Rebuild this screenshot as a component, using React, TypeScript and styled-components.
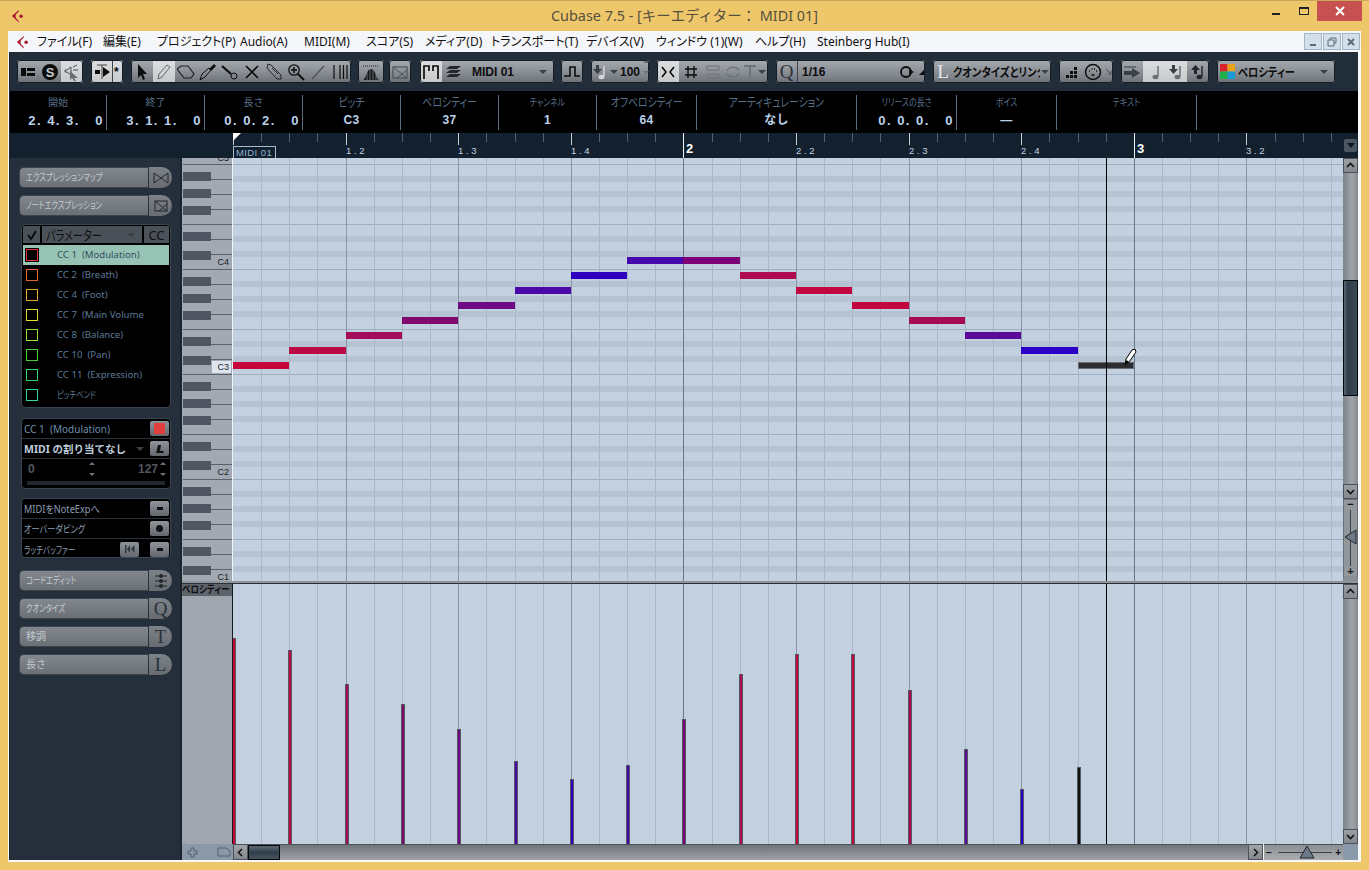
import React from "react";
import styled, { createGlobalStyle } from "styled-components";

const UI = `"Noto Sans", "Noto Sans CJK JP", sans-serif`;
const BOLD = `"Liberation Sans", "Noto Sans CJK JP", sans-serif`;

const BEAT = 112.6;
const SIXTEENTH = BEAT / 4;
const STEP = BEAT / 2;

const GlobalStyle = createGlobalStyle`
  html, body { margin: 0; padding: 0; background: #efc76b; }
  * { box-sizing: border-box; font-feature-settings: "palt"; }
`;

const menus = [
  ["ファイル(F)", 66],
  ["編集(E)", 54],
  ["プロジェクト(P)", 83],
  ["Audio(A)", 64],
  ["MIDI(M)", 62],
  ["スコア(S)", 59],
  ["メディア(D)", 66],
  ["トランスポート(T)", 95],
  ["デバイス(V)", 70],
  ["ウィンドウ (1)(W)", 99],
  ["ヘルプ(H)", 62],
  ["Steinberg Hub(I)", 110],
] as const;

const infoCells = [
  { label: "開始", value: "2. 4. 3.   0", w: 97, time: true },
  { label: "終了", value: "3. 1. 1.   0", w: 98, time: true },
  { label: "長さ", value: "0. 0. 2.   0", w: 98, time: true },
  { label: "ピッチ", value: "C3", w: 98, big: true, kana: true },
  { label: "ベロシティー", value: "37", w: 98, big: true, kana: true },
  { label: "チャンネル", value: "1", w: 98, kana: true },
  { label: "オフベロシティー", value: "64", w: 100, big: true, kana: true },
  { label: "アーティキュレーション", value: "なし", w: 160, big: true, kana: true },
  { label: "リリースの長さ", value: "0. 0. 0.   0", w: 100, time: true, kana: true },
  { label: "ボイス", value: "—", w: 100, kana: true },
  { label: "テキスト", value: "", w: 140, kana: true },
];

const notes = [
  { y: 365, top: 638, c: "#c4083a" },
  { y: 350, top: 650, c: "#bc0845" },
  { y: 335, top: 684, c: "#a30a58" },
  { y: 320, top: 704, c: "#80086f" },
  { y: 305, top: 729, c: "#6f0a84" },
  { y: 290, top: 761, c: "#4a08a8" },
  { y: 275, top: 779, c: "#3000c0" },
  { y: 260, top: 765, c: "#4408ac" },
  { y: 260, top: 719, c: "#7d0078" },
  { y: 275, top: 674, c: "#b00a50" },
  { y: 290, top: 654, c: "#c2063f" },
  { y: 305, top: 654, c: "#c2063f" },
  { y: 320, top: 690, c: "#a50a55" },
  { y: 335, top: 749, c: "#5a0a98" },
  { y: 350, top: 789, c: "#2a00c8" },
  { y: 365, top: 767, c: "#111111" },
];

const blackKeys = [172, 189, 206, 232, 251, 277, 294, 311, 337, 356, 382, 399, 416, 442, 461, 487, 504, 521, 547, 566];
const keyLines = Array.from({ length: 28 }, (_, i) => 164 + i * 15);
const fullLines = [164, 224, 269, 329, 374, 434, 479, 539];

const controllers = [
  ["CC 1  (Modulation)", "#e03030"],
  ["CC 2  (Breath)", "#e46a2c"],
  ["CC 4  (Foot)", "#e0a52c"],
  ["CC 7  (Main Volume", "#d8dc30"],
  ["CC 8  (Balance)", "#90e030"],
  ["CC 10  (Pan)", "#44d030"],
  ["CC 11  (Expression)", "#30d468"],
  ["ピッチベンド", "#30d8a0"],
];

const Page = styled.div`
  width: 1369px;
  height: 870px;
  background: #efc76b;
  border-top: 1px solid #c9a858;
  display: flex;
  flex-direction: column;
  overflow: hidden;
`;

const TitleBar = styled.div`
  height: 30px;
  display: grid;
  grid-template-columns: 1fr auto 1fr;
  align-items: start;
`;

const TitleLogo = styled.div`
  padding: 8px 0 0 11px;
`;

const TitleText = styled.div`
  padding-top: 5px;
  font: 14.4px ${UI};
  line-height: 20px;
  color: #55503f;
  white-space: pre;
`;

const WinControls = styled.div`
  display: flex;
  justify-content: flex-end;
  padding-right: 7px;
`;

const WinButton = styled.div<{ $w: number; $close?: boolean }>`
  width: ${(p) => p.$w}px;
  height: 20px;
  display: flex;
  align-items: center;
  justify-content: center;
  background: ${(p) => (p.$close ? "#c75050" : "transparent")};
`;

const WinMin = styled.div`
  width: 8px;
  height: 2px;
  margin-top: 6px;
  background: #222;
`;

const WinMax = styled.div`
  width: 10px;
  height: 8px;
  border: 1px solid #222;
  border-top-width: 2px;
`;

const Client = styled.div`
  margin: 0 8px;
  height: 831px;
  background: #f7f8fb;
  display: flex;
  flex-direction: column;
`;

const MenuBar = styled.div`
  height: 21px;
  display: flex;
  align-items: center;
  background: #f5f6fa;
  font: 12px ${UI};
  color: #111;
  flex: none;
`;

const MenuLogo = styled.div`
  width: 29px;
  padding-left: 8px;
  flex: none;
`;

const MenuItem = styled.div<{ $w: number }>`
  width: ${(p) => p.$w}px;
  flex: none;
  white-space: pre;
  line-height: 20px;
`;

const MdiButtons = styled.div`
  margin-left: auto;
  display: flex;
  gap: 1px;
  padding-right: 1px;
`;

const MdiButton = styled.div`
  width: 18px;
  height: 17px;
  background: #d3e0ec;
  border: 1px solid #a3b6c8;
  display: flex;
  align-items: center;
  justify-content: center;
`;

const Inner = styled.div`
  margin: 0 3px 0 1px;
  border-left: 1px solid #1b232c;
  flex: none;
  display: flex;
  flex-direction: column;
  height: 808px;
`;

const Toolbar = styled.div`
  height: 39px;
  background: #222d3a;
  padding: 8px 0 0 7px;
  display: flex;
  align-items: flex-start;
  flex: none;
`;

const Group = styled.div<{ $w: number; $ml?: number }>`
  width: ${(p) => p.$w}px;
  height: 23px;
  margin-left: ${(p) => p.$ml ?? 8}px;
  flex: none;
  display: flex;
  align-items: stretch;
  border-radius: 3px;
  overflow: hidden;
  outline: 1px solid #161c23;
  outline-offset: -1px;
  background: linear-gradient(#a6abb0, #8b9096 50%, #6b7178);
`;

const Seg = styled.div<{ $w?: number; $on?: boolean; $line?: boolean }>`
  width: ${(p) => (p.$w ? `${p.$w}px` : "auto")};
  flex: ${(p) => (p.$w ? "none" : "1")};
  display: flex;
  align-items: center;
  justify-content: center;
  background: ${(p) => (p.$on ? "linear-gradient(#dcdedf, #c6c8c9)" : "transparent")};
  border-right: ${(p) => (p.$line ? "1px solid #3d434a" : "none")};
`;

const SegLabel = styled.div<{ $pad?: number }>`
  flex: 1;
  min-width: 0;
  overflow: hidden;
  white-space: nowrap;
  padding-left: ${(p) => p.$pad ?? 8}px;
  align-self: center;
  font: bold 12px ${BOLD};
  color: #0c0c0c;
`;

// the original UI font has narrow kana, so kana labels are squeezed sideways
const Narrow = styled.span<{ $x?: number; $center?: boolean }>`
  display: inline-block;
  white-space: pre;
  transform: scaleX(${(p) => p.$x ?? 0.76});
  transform-origin: ${(p) => (p.$center ? "center" : "left")} center;
`;

const Caret = styled.div<{ $tight?: boolean }>`
  flex: none;
  width: 0;
  height: 0;
  align-self: center;
  margin: ${(p) => (p.$tight ? "1px 2px 0 1px" : "1px 7px 0 3px")};
  border: 4px solid transparent;
  border-top-color: #3b4047;
  border-bottom: 0;
`;

const Ico = styled.svg<{ $s?: number }>`
  width: ${(p) => p.$s ?? 18}px;
  height: ${(p) => p.$s ?? 18}px;
  display: block;
  flex: none;
`;

const SerifLetter = styled.div<{ $c?: string }>`
  font: 19px "Liberation Serif", serif;
  color: ${(p) => p.$c ?? "#2b3036"};
  line-height: 20px;
`;

const InfoLine = styled.div`
  height: 42px;
  background: #000;
  padding-top: 4px;
  display: flex;
  flex: none;
`;

const InfoCell = styled.div<{ $w: number }>`
  width: ${(p) => p.$w}px;
  height: 35px;
  flex: none;
  border-right: 1px solid #5c6d7f;
  text-align: center;
`;

const InfoLabel = styled.div<{ $big?: boolean }>`
  height: 17px;
  font: ${(p) => (p.$big ? 12.5 : 10)}px ${UI};
  line-height: 15px;
  color: #586f87;
  white-space: nowrap;
`;

const InfoValue = styled.div<{ $time?: boolean }>`
  font: bold ${(p) => (p.$time ? 13 : 12)}px ${BOLD};
  line-height: 17px;
  letter-spacing: ${(p) => (p.$time ? 1.5 : 0.3)}px;
  color: #bcd2ea;
  white-space: pre;
  text-align: ${(p) => (p.$time ? "right" : "center")};
  padding-right: ${(p) => (p.$time ? 2 : 0)}px;
`;

const Ruler = styled.div`
  height: 25px;
  background: #13202e;
  position: relative;
  flex: none;
  overflow: hidden;
`;

const RulerTick = styled.div<{ $kind: "bar" | "beat" | "sub" }>`
  position: absolute;
  top: 0;
  width: 1px;
  height: ${(p) => (p.$kind === "bar" ? 25 : p.$kind === "beat" ? 12 : 9)}px;
  background: ${(p) => (p.$kind === "bar" ? "#f2f5f8" : p.$kind === "beat" ? "#c3ced9" : "#52606e")};
`;

const RulerLabel = styled.div<{ $bar?: boolean }>`
  position: absolute;
  top: ${(p) => (p.$bar ? 8 : 12)}px;
  font: ${(p) => (p.$bar ? "bold 13px" : "9.5px")} ${BOLD};
  line-height: ${(p) => (p.$bar ? 15 : 11)}px;
  color: ${(p) => (p.$bar ? "#fff" : "#c2d2e2")};
  white-space: pre;
`;

const PartBox = styled.div`
  position: absolute;
  left: 223px;
  top: 13px;
  width: 43px;
  height: 12px;
  border: 1px solid #a5bacb;
  border-bottom: 0;
  padding-left: 2px;
  font: 9.5px ${BOLD};
  line-height: 12px;
  letter-spacing: 0.4px;
  color: #8fb2d0;
`;

const StartFlag = styled.div`
  position: absolute;
  left: 223px;
  top: 0;
  width: 0;
  height: 0;
  border-top: 8px solid #fff;
  border-right: 8px solid transparent;
`;

const RulerMenu = styled.div`
  position: absolute;
  left: 1334px;
  top: 6px;
  width: 13px;
  height: 13px;
  border-radius: 2px;
  background: #4b5662;
  display: flex;
  align-items: center;
  justify-content: center;
`;

const RulerMenuArrow = styled.div`
  width: 0;
  height: 0;
  border: 4px solid transparent;
  border-top: 5px solid #0d141b;
  border-bottom: 0;
`;

const Body = styled.div`
  height: 702px;
  display: flex;
  flex: none;
`;

const LeftZone = styled.div`
  width: 172px;
  flex: none;
  background: #252f3b;
  border-right: 2px solid #1b232c;
  display: flex;
  flex-direction: column;
  padding: 9px 0 0 9px;
`;

const SideButton = styled.div<{ $mt?: number }>`
  width: 153px;
  height: 21px;
  margin-top: ${(p) => p.$mt ?? 7}px;
  display: flex;
  flex: none;
`;

const SideLabel = styled.div`
  width: 130px;
  border-radius: 5px 0 0 5px;
  background: linear-gradient(#82888e, #6a7076);
  border: 1px solid #3b434c;
  border-right: 1px solid #2b3138;
  padding-left: 6px;
  font: 10px ${UI};
  line-height: 19px;
  color: #c3cad0;
  white-space: nowrap;
  overflow: hidden;
`;

const SideTail = styled.div`
  width: 23px;
  border-radius: 0 11px 11px 0;
  background: linear-gradient(#7c8288, #666c72);
  display: flex;
  align-items: center;
  justify-content: center;
`;

const Panel = styled.div<{ $h: number; $mt: number }>`
  width: 150px;
  height: ${(p) => p.$h}px;
  margin: ${(p) => p.$mt}px 0 0 2px;
  flex: none;
  background: #000;
  border: 1px solid #3a4552;
  border-radius: 4px;
  display: flex;
  flex-direction: column;
  overflow: hidden;
`;

const ParamHeader = styled.div`
  height: 17px;
  margin: 1px 1px 2px;
  display: flex;
  gap: 2px;
  flex: none;
`;

const HeadCell = styled.div<{ $w?: number }>`
  width: ${(p) => (p.$w ? `${p.$w}px` : "auto")};
  flex: ${(p) => (p.$w ? "none" : "1")};
  background: #4b5159;
  display: flex;
  align-items: center;
  justify-content: center;
  font: 13px ${UI};
  color: #101010;
  min-width: 0;
`;

const HeadTitle = styled.div`
  flex: 1;
  min-width: 0;
  padding-left: 4px;
  white-space: nowrap;
`;

const ParamRow = styled.div<{ $on?: boolean }>`
  height: 20px;
  margin: 0 1px;
  flex: none;
  display: flex;
  align-items: center;
  padding-left: 3px;
  background: ${(p) => (p.$on ? "#97c3b5" : "transparent")};
`;

const Swatch = styled.div<{ $c: string; $on?: boolean }>`
  width: 12px;
  height: 12px;
  flex: none;
  background: ${(p) => (p.$on ? "#000" : "transparent")};
  border: 1px solid ${(p) => p.$c};
  outline: ${(p) => (p.$on ? "1px solid #000" : "none")};
`;

const ParamText = styled.div<{ $on?: boolean }>`
  margin-left: 19px;
  width: 87px;
  overflow: hidden;
  white-space: pre;
  font: 9.6px ${UI};
  line-height: 14px;
  color: ${(p) => (p.$on ? "#34505e" : "#5c7a96")};
`;

const PanelRow = styled.div<{ $line?: boolean }>`
  height: 20px;
  flex: none;
  display: flex;
  align-items: center;
  padding: 0 1px 0 2px;
  gap: 4px;
  border-bottom: ${(p) => (p.$line ? "1px solid #2b343e" : "none")};
`;

const PanelText = styled.div<{ $bold?: boolean; $dim?: boolean }>`
  flex: 1;
  min-width: 0;
  white-space: pre;
  overflow: hidden;
  font: ${(p) => (p.$bold ? "bold 10.5px" : "10px")} ${UI};
  color: ${(p) => (p.$bold ? "#bccbdb" : p.$dim ? "#8b9eb1" : "#6f8da9")};
`;

const SquareBtn = styled.div<{ $mr?: number }>`
  width: 19px;
  height: 15px;
  flex: none;
  margin-right: ${(p) => p.$mr ?? 0}px;
  border-radius: 2px;
  background: linear-gradient(#8e9499, #62686e);
  display: flex;
  align-items: center;
  justify-content: center;
`;

const RedLamp = styled.div`
  width: 11px;
  height: 11px;
  background: #e23d3d;
`;

const SmallDash = styled.div`
  width: 6px;
  height: 3px;
  background: #111;
`;

const SmallDot = styled.div`
  width: 7px;
  height: 7px;
  border-radius: 50%;
  background: #111;
`;

const RangeRow = styled.div`
  height: 20px;
  flex: none;
  display: flex;
  align-items: center;
  padding: 0 4px 0 6px;
  font: bold 12px ${BOLD};
  color: #4f565e;
`;

const RangeEnd = styled.div`
  margin-left: auto;
`;

const Spin = styled.div<{ $ml?: number }>`
  width: 6px;
  height: 14px;
  margin-left: ${(p) => p.$ml ?? 2}px;
  display: flex;
  flex-direction: column;
  justify-content: space-between;
  flex: none;
`;

const SpinUp = styled.div`
  width: 0;
  height: 0;
  border: 3px solid transparent;
  border-bottom: 3px solid #6a7178;
  border-top: 0;
`;

const SpinDown = styled(SpinUp)`
  transform: rotate(180deg);
`;

const RangeBar = styled.div`
  height: 4px;
  margin: 2px 5px 0;
  background: #20272e;
  flex: none;
`;

const Editor = styled.div`
  flex: 1;
  min-width: 0;
  display: flex;
  flex-direction: column;
`;

const NoteRow = styled.div`
  height: 423px;
  display: flex;
  flex: none;
`;

const Keyboard = styled.div`
  width: 51px;
  flex: none;
  background: #a3a9b3;
  position: relative;
  overflow: hidden;
  border-right: 1px solid #f0f4f8;
`;

const BlackKey = styled.div`
  position: absolute;
  left: 1px;
  width: 28px;
  height: 9px;
  background: #4f5661;
`;

const KeyLine = styled.div<{ $full?: boolean }>`
  position: absolute;
  left: ${(p) => (p.$full ? 1 : 29)}px;
  right: 0;
  height: 1px;
  background: #5c626b;
`;

const KeyLabel = styled.div<{ $on?: boolean }>`
  position: absolute;
  right: 1px;
  width: 19px;
  height: 12px;
  padding-right: 2px;
  text-align: right;
  font: 9px ${BOLD};
  line-height: 12px;
  color: #1a1f25;
  background: ${(p) => (p.$on ? "#dde6ee" : "transparent")};
`;

const Grid = styled.div`
  flex: 1;
  min-width: 0;
  position: relative;
  overflow: hidden;
  background-color: #c2d0df;
  background-image: repeating-linear-gradient(
    to bottom,
    transparent 0 6px,
    #9fafbf 6px 7px,
    transparent 7px 18px,
    #b5c3d3 18px 24px,
    transparent 24px 33px,
    #b5c3d3 33px 39px,
    transparent 39px 48px,
    #b5c3d3 48px 54px,
    transparent 54px 66px,
    #9fafbf 66px 67px,
    transparent 67px 78px,
    #b5c3d3 78px 84px,
    transparent 84px 93px,
    #b5c3d3 93px 99px,
    transparent 99px 105px
  );
`;

const VLine = styled.div<{ $kind: "bar" | "beat" | "sub" }>`
  position: absolute;
  top: 0;
  bottom: 0;
  width: 1px;
  background: ${(p) => (p.$kind === "bar" ? "#66778a" : p.$kind === "beat" ? "#8796a7" : "#a9b7c6")};
`;

const Cursor = styled.div`
  position: absolute;
  left: 873px;
  top: 0;
  bottom: 0;
  width: 1px;
  background: #000;
`;

const Note = styled.div<{ $sel?: boolean }>`
  position: absolute;
  height: 7px;
  border: ${(p) => (p.$sel ? "1px solid #6a6e73" : "none")};
`;

const PencilCursor = styled.svg`
  position: absolute;
  left: 891px;
  top: 190px;
  width: 14px;
  height: 18px;
`;

const VScroll = styled.div`
  width: 15px;
  flex: none;
  background: #8a8f95;
  display: flex;
  flex-direction: column;
`;

const ScrollBtn = styled.div`
  height: 15px;
  flex: none;
  background: linear-gradient(#9a9fa4, #85898f);
  border: 1px solid #4b5158;
  display: flex;
  align-items: center;
  justify-content: center;
`;

const Track = styled.div<{ $pad?: number }>`
  flex: 1;
  padding-top: ${(p) => p.$pad ?? 0}px;
  background: linear-gradient(to right, #7f8489, #a0a5a9 60%, #85898f);
  min-height: 0;
`;

const VThumb = styled.div`
  height: 116px;
  border: 1px solid #05080b;
  background: linear-gradient(to right, #5a6672, #2f3d4a 30%, #3b4a58);
`;

const ZoomStrip = styled.div`
  height: 82px;
  flex: none;
  position: relative;
  background: #92979c;
  border: 1px solid #6a7076;
  border-bottom: 5px solid #8a8f95;
`;

const ZoomSign = styled.div<{ $bottom?: boolean }>`
  position: absolute;
  left: 0;
  right: 0;
  ${(p) => (p.$bottom ? "bottom: -1px;" : "top: -2px;")}
  text-align: center;
  font: bold 11px ${BOLD};
  line-height: 12px;
  color: #111;
`;

const ZoomRail = styled.div`
  position: absolute;
  left: 6px;
  top: 10px;
  bottom: 10px;
  width: 1px;
  background: #3c4147;
`;

const ZoomKnob = styled.svg`
  position: absolute;
  left: 0;
  top: 29px;
  width: 13px;
  height: 16px;
`;

const Splitter = styled.div`
  height: 3px;
  flex: none;
  background: #8e949a;
  border-bottom: 1px solid #2b3036;
`;

const LaneRow = styled.div`
  height: 260px;
  display: flex;
  flex: none;
`;

const LaneKeys = styled.div`
  width: 51px;
  flex: none;
  background: #a0a6b0;
  border-right: 1px solid #14181d;
`;

const LaneTitle = styled.div`
  height: 12px;
  background: #5f646b;
  font: bold 10px ${BOLD};
  line-height: 12px;
  color: #0b0d10;
  white-space: nowrap;
  overflow: hidden;
`;

const Lane = styled.div`
  flex: 1;
  min-width: 0;
  position: relative;
  overflow: hidden;
  background: #c2d0df;
`;

const VelBar = styled.div`
  position: absolute;
  bottom: 0;
  width: 4px;
  border: 1px solid #55585e;
  border-bottom: 0;
`;

const BottomRow = styled.div`
  height: 16px;
  display: flex;
  flex: none;
`;

const BottomTools = styled.div`
  width: 51px;
  flex: none;
  background: #8b98a7;
  display: flex;
  align-items: center;
  justify-content: space-between;
  padding: 0 2px 0 5px;
`;

const HButton = styled.div`
  width: 15px;
  flex: none;
  background: linear-gradient(#a1a5a9, #84888d);
  border: 1px solid #4b5158;
  display: flex;
  align-items: center;
  justify-content: center;
`;

const HTrack = styled.div`
  flex: 1;
  min-width: 0;
  background: linear-gradient(#6f7479, #9ea2a6);
  border-top: 1px solid #4b5158;
`;

const HThumb = styled.div`
  width: 32px;
  height: 15px;
  border: 1px solid #05080b;
  background: linear-gradient(#5c6876, #2f3d4a 50%, #46545f);
`;

const HZoom = styled.div`
  width: 79px;
  flex: none;
  margin-left: 1px;
  position: relative;
  background: linear-gradient(#8c9094, #a9adb0);
  border-top: 1px solid #4b5158;
`;

const HZoomSign = styled.div<{ $right?: boolean }>`
  position: absolute;
  ${(p) => (p.$right ? "right: 2px;" : "left: 2px;")}
  top: 1px;
  font: bold 10px ${BOLD};
  line-height: 13px;
  color: #111;
`;

const HZoomRail = styled.div`
  position: absolute;
  left: 14px;
  right: 11px;
  top: 7px;
  height: 1px;
  background: #3c4147;
`;

const HZoomKnob = styled.svg`
  position: absolute;
  left: 35px;
  top: 0;
  width: 16px;
  height: 14px;
`;

const Corner = styled.div`
  width: 15px;
  flex: none;
  background: #8a9aab;
`;

function CubaseLogo({ size }: { size: number }) {
  return (
    <Ico $s={size} viewBox="0 0 16 16">
      <path d="M9 1 L1 8 L9 15.5 C9.5 13.5 7.5 12 6.3 11 C4.8 9.6 4.8 6.6 6.3 5.2 C7.5 4 9.5 3 9 1Z" fill="#a8172f" />
      <circle cx="11.6" cy="8.2" r="2" fill="#a8172f" />
    </Ico>
  );
}

function Chevron({ dir }: { dir: "up" | "down" | "left" | "right" }) {
  const d = {
    up: "M2 7 L5.5 3.5 L9 7",
    down: "M2 4 L5.5 7.5 L9 4",
    left: "M7 2 L3.5 5.5 L7 9",
    right: "M4 2 L7.5 5.5 L4 9",
  }[dir];
  return (
    <Ico $s={11} viewBox="0 0 11 11">
      <path d={d} fill="none" stroke="#111" strokeWidth="1.6" />
    </Ico>
  );
}

function Tool({ children }: { children: React.ReactNode }) {
  return <Ico viewBox="0 0 18 18">{children}</Ico>;
}

function NoteGlyph({ arrow, c = "#5b6067" }: { arrow?: "up" | "down"; c?: string }) {
  return (
    <Tool>
      <path d="M13 3V13" stroke={c} strokeWidth="1.5" />
      <ellipse cx="10.5" cy="14" rx="3" ry="2.2" fill={c} />
      {arrow === "down" && <path d="M2 6H5V2H8V6H11L6.5 11Z" fill="#3a3f45" />}
      {arrow === "up" && <path d="M2 7H5V11H8V7H11L6.5 2Z" fill="#23272c" />}
    </Tool>
  );
}

function Toolbars() {
  return (
    <Toolbar>
      <Group $w={66} $ml={0}>
        <Seg $w={22}>
          <Tool>
            <rect x="2" y="5" width="5" height="8" fill="#0c0c0c" />
            <rect x="8" y="5" width="8" height="3" fill="#0c0c0c" />
            <rect x="8" y="10" width="8" height="3" fill="#0c0c0c" />
          </Tool>
        </Seg>
        <Seg $w={22}>
          <Tool>
            <circle cx="9" cy="9" r="8" fill="#0c0c0c" />
            <text x="9" y="13.5" textAnchor="middle" fontFamily="Liberation Sans" fontWeight="bold" fontSize="13" fill="#c8ccd0">
              S
            </text>
          </Tool>
        </Seg>
        <Seg $w={22} $on>
          <Tool>
            <path d="M2 7H4L8 4V12L4 9H2Z" fill="none" stroke="#4a4e54" />
            <path d="M10 4L14 2M10 7H15" stroke="#4a4e54" />
            <path d="M7 8L15 15L11 15L13 18L11 18L9 15L7 17Z" fill="#6a6f75" />
          </Tool>
        </Seg>
      </Group>
      <Group $w={32}>
        <Seg $w={22} $on $line>
          <Tool>
            <path d="M4 2H14M9 2V16" stroke="#444" strokeWidth="1" />
            <rect x="2" y="7" width="5" height="4" fill="#0c0c0c" />
            <path d="M10 4L17 9L10 14Z" fill="#0c0c0c" />
          </Tool>
        </Seg>
        <Seg $w={10} $on>
          <SegLabel $pad={1}>*</SegLabel>
        </Seg>
      </Group>
      <Group $w={220}>
        <Seg $w={22}>
          <Tool>
            <path d="M5 1V15L8 12L10 17L12 16L10 11H14Z" fill="#0c0c0c" />
          </Tool>
        </Seg>
        <Seg $w={22} $on>
          <Tool>
            <path d="M3 16L4 11L12 2L15 4L7 14Z" fill="none" stroke="#63686e" />
          </Tool>
        </Seg>
        <Seg $w={22}>
          <Tool>
            <path d="M0 6L4 3H11L17 11L14 15H7Z" fill="none" stroke="#1c1f23" strokeWidth="1.2" />
          </Tool>
        </Seg>
        <Seg $w={22}>
          <Tool>
            <path d="M1 17L3 11L10 5L12 7L6 14Z" fill="none" stroke="#0c0c0c" />
            <path d="M10 6L15 1L17 3L12 8Z" fill="#0c0c0c" />
          </Tool>
        </Seg>
        <Seg $w={22}>
          <Tool>
            <path d="M1 3L10 11" stroke="#0c0c0c" strokeWidth="2.2" />
            <circle cx="13" cy="13" r="3" fill="none" stroke="#0c0c0c" />
          </Tool>
        </Seg>
        <Seg $w={22}>
          <Tool>
            <path d="M3 3L15 15M15 3L3 15" stroke="#0c0c0c" strokeWidth="1.6" />
          </Tool>
        </Seg>
        <Seg $w={22}>
          <Tool>
            <path d="M3 1L6 2L16 12L16 16L12 16L2 5Z" fill="none" stroke="#23272c" />
            <path d="M7 5L13 11" stroke="#23272c" />
          </Tool>
        </Seg>
        <Seg $w={22}>
          <Tool>
            <circle cx="7" cy="7" r="5.2" fill="none" stroke="#0c0c0c" strokeWidth="1.3" />
            <path d="M4 7H10M7 4V10" stroke="#0c0c0c" strokeWidth="1.5" />
            <path d="M11 11L17 17" stroke="#0c0c0c" strokeWidth="2" />
          </Tool>
        </Seg>
        <Seg $w={22}>
          <Tool>
            <path d="M3 16L15 3" stroke="#4e5359" strokeWidth="1.4" />
          </Tool>
        </Seg>
        <Seg $w={22}>
          <Tool>
            <path d="M3 2V16M9 2V16M12.5 2V16M16 2V16" stroke="#0c0c0c" strokeWidth="1.2" />
          </Tool>
        </Seg>
      </Group>
      <Group $w={26} $ml={7}>
        <Seg>
          <Tool>
            <path d="M1 3H17" stroke="#222" strokeDasharray="1 1" />
            <path d="M1 17C4 17 4 6 9 6C14 6 14 17 17 17Z" fill="#14171a" />
            <path d="M5 8V17M8 6V17M11 6V17M14 9V17" stroke="#8d9297" strokeWidth="0.7" />
          </Tool>
        </Seg>
      </Group>
      <Group $w={22} $ml={5}>
        <Seg>
          <Tool>
            <rect x="2" y="4" width="14" height="11" fill="none" stroke="#50555b" strokeWidth="1.2" />
            <path d="M2 4L16 15M6 15L16 7" stroke="#50555b" />
          </Tool>
        </Seg>
      </Group>
      <Group $w={134} $ml={9}>
        <Seg $w={22} $on>
          <Tool>
            <path d="M2 16V3H7V8M16 16V3H11V8" fill="none" stroke="#0c0c0c" strokeWidth="1.7" />
          </Tool>
        </Seg>
        <Seg $w={22}>
          <Tool>
            <path d="M2 6L6 3H17L13 6ZM2 10L6 7H17L13 10ZM2 14L6 11H17L13 14Z" fill="#23272c" />
          </Tool>
        </Seg>
        <SegLabel>MIDI 01</SegLabel>
        <Caret />
      </Group>
      <Group $w={22} $ml={7}>
        <Seg>
          <Tool>
            <path d="M1 13H7V4H12V13H17" fill="none" stroke="#0c0c0c" strokeWidth="1.6" />
          </Tool>
        </Seg>
      </Group>
      <Group $w={58}>
        <Seg $w={18}>
          <NoteGlyph arrow="down" c="#d3d6d8" />
        </Seg>
        <Caret $tight />
        <SegLabel $pad={0}>100</SegLabel>
        <Spin $ml={0}>
          <SpinUp />
          <SpinDown />
        </Spin>
      </Group>
      <Group $w={111}>
        <Seg $w={22} $on>
          <Tool>
            <path d="M3 4L7 9L3 14M15 4L11 9L15 14" fill="none" stroke="#0c0c0c" strokeWidth="1.6" />
          </Tool>
        </Seg>
        <Seg $w={24}>
          <Tool>
            <path d="M6 3V15M12 3V15M3 6H15M3 12H15" stroke="#0c0c0c" strokeWidth="1.4" />
          </Tool>
        </Seg>
        <Seg $w={20}>
          <Tool>
            <path d="M3 3H15V7H3ZM3 11H15V15H3Z" fill="none" stroke="#6e7379" />
          </Tool>
        </Seg>
        <Seg $w={20}>
          <Tool>
            <path d="M3 8C5 3 12 3 15 7M15 10C13 15 6 15 3 11" fill="none" stroke="#6e7379" strokeWidth="1.4" />
          </Tool>
        </Seg>
        <Seg $w={14}>
          <Tool>
            <path d="M3 3H15M9 3V15" stroke="#6e7379" strokeWidth="2" />
          </Tool>
        </Seg>
        <Caret $tight />
      </Group>
      <Group $w={149}>
        <Seg $w={22} $line>
          <SerifLetter>Q</SerifLetter>
        </Seg>
        <SegLabel $pad={4}>1/16</SegLabel>
        <Seg $w={18}>
          <Tool>
            <circle cx="8" cy="9" r="5" fill="none" stroke="#0c0c0c" strokeWidth="1.8" />
            <path d="M11 6L16 9L11 12Z" fill="#0c0c0c" />
          </Tool>
        </Seg>
        <Seg $w={9}>
          <Ico $s={9} viewBox="0 0 9 9">
            <path d="M8 3V8H3Z" fill="#0c0c0c" />
          </Ico>
        </Seg>
      </Group>
      <Group $w={118}>
        <Seg $w={20}>
          <SerifLetter $c="#e4e8ec">L</SerifLetter>
        </Seg>
        <SegLabel $pad={0}>
          <Narrow $x={0.86}>クオンタイズとリンク</Narrow>
        </SegLabel>
        <Caret $tight />
      </Group>
      <Group $w={54}>
        <Seg $w={24}>
          <Tool>
            <path d="M12 4H15V7H12ZM8 8H11V11H8ZM12 8H15V11H12ZM4 12H7V15H4ZM8 12H11V15H8ZM12 12H15V15H12Z" fill="#0c0c0c" />
          </Tool>
        </Seg>
        <Seg $w={20}>
          <Tool>
            <circle cx="9" cy="9" r="7.5" fill="none" stroke="#0c0c0c" strokeWidth="1.5" />
            <path d="M5 8H6M7.5 6H8.5M10 6H11M12 8H13M7.5 12H10.5" stroke="#0c0c0c" strokeWidth="1.3" />
          </Tool>
        </Seg>
        <Seg $w={10}>
          <Ico $s={9} viewBox="0 0 9 9">
            <path d="M2 2L7 7M7 4V7H4" fill="none" stroke="#4e5359" />
          </Ico>
        </Seg>
      </Group>
      <Group $w={88}>
        <Seg $w={22}>
          <Tool>
            <path d="M1 8H9V5L17 10L9 15V12H1Z" fill="#3b4047" />
            <path d="M1 4H13" stroke="#666b71" strokeWidth="2" />
          </Tool>
        </Seg>
        <Seg $w={22} $on>
          <NoteGlyph c="#6a6f75" />
        </Seg>
        <Seg $w={22} $on>
          <NoteGlyph arrow="down" c="#6a6f75" />
        </Seg>
        <Seg $w={22}>
          <NoteGlyph arrow="up" c="#23272c" />
        </Seg>
      </Group>
      <Group $w={118}>
        <Seg $w={21}>
          <Ico $s={15} viewBox="0 0 14 14">
            <rect x="0" y="0" width="7" height="7" fill="#d8232a" />
            <rect x="7" y="0" width="7" height="7" fill="#e8a317" />
            <rect x="0" y="7" width="7" height="7" fill="#1fb14c" />
            <rect x="7" y="7" width="7" height="7" fill="#1d9bd8" />
          </Ico>
        </Seg>
        <SegLabel $pad={0}>
          <Narrow $x={0.85}>ベロシティー</Narrow>
        </SegLabel>
        <Caret />
      </Group>
    </Toolbar>
  );
}

function RulerStrip() {
  const ticks = Array.from({ length: 40 }, (_, i) => i).map((i) => ({
    x: Math.round(223 + i * SIXTEENTH),
    kind: (i % 16 === 0 && i > 0 ? "bar" : i % 4 === 0 ? "beat" : "sub") as "bar" | "beat" | "sub",
  }));
  const labels = [
    { t: "1 . 2", i: 1 },
    { t: "1 . 3", i: 2 },
    { t: "1 . 4", i: 3 },
    { t: "2", i: 4, bar: true },
    { t: "2 . 2", i: 5 },
    { t: "2 . 3", i: 6 },
    { t: "2 . 4", i: 7 },
    { t: "3", i: 8, bar: true },
    { t: "3 . 2", i: 9 },
  ];
  return (
    <Ruler>
      {ticks.map((t, i) => (
        <RulerTick key={i} $kind={t.kind} style={{ left: t.x }} />
      ))}
      {labels.map((l) => (
        <RulerLabel key={l.t} $bar={l.bar} style={{ left: Math.round(223 + l.i * BEAT) + (l.bar ? 3 : 0) }}>
          {l.t}
        </RulerLabel>
      ))}
      <StartFlag />
      <PartBox>MIDI 01</PartBox>
      <RulerMenu>
        <RulerMenuArrow />
      </RulerMenu>
    </Ruler>
  );
}

function GridLines() {
  return (
    <>
      {Array.from({ length: 40 }, (_, i) => i)
        .filter((i) => i > 0)
        .map((i) => (
          <VLine
            key={i}
            $kind={i % 16 === 0 ? "bar" : i % 4 === 0 ? "beat" : "sub"}
            style={{ left: Math.round(i * SIXTEENTH) }}
          />
        ))}
    </>
  );
}

function SideBtn({ label, kana, mt, children }: { label: string; kana?: boolean; mt?: number; children: React.ReactNode }) {
  return (
    <SideButton $mt={mt}>
      <SideLabel>{kana ? <Narrow $x={0.73}>{label}</Narrow> : label}</SideLabel>
      <SideTail>{children}</SideTail>
    </SideButton>
  );
}

function LeftPanel() {
  return (
    <LeftZone>
      <SideBtn label="エクスプレッションマップ" kana mt={0}>
        <Tool>
          <path d="M2 4L9 9L2 14ZM16 4L9 9L16 14Z" fill="none" stroke="#23272c" />
        </Tool>
      </SideBtn>
      <SideBtn label="ノートエクスプレッション" kana>
        <Tool>
          <rect x="3" y="4" width="12" height="10" fill="none" stroke="#23272c" />
          <path d="M3 4L15 14M7 14L15 7" stroke="#23272c" />
        </Tool>
      </SideBtn>
      <Panel $h={184} $mt={8}>
        <ParamHeader>
          <HeadCell $w={17}>
            <Ico $s={12} viewBox="0 0 12 12">
              <path d="M2 6L5 10L10 2" fill="none" stroke="#0c0c0c" strokeWidth="2" />
            </Ico>
          </HeadCell>
          <HeadCell>
            <HeadTitle>
              <Narrow $x={0.78}>パラメーター</Narrow>
            </HeadTitle>
            <Caret />
          </HeadCell>
          <HeadCell $w={25}>CC</HeadCell>
        </ParamHeader>
        {controllers.map(([name, c], i) => (
          <ParamRow key={name} $on={i === 0}>
            <Swatch $c={c} $on={i === 0} />
            <ParamText $on={i === 0}>{i === 7 ? <Narrow>{name}</Narrow> : name}</ParamText>
          </ParamRow>
        ))}
      </Panel>
      <Panel $h={71} $mt={10}>
        <PanelRow $line>
          <PanelText>CC 1  (Modulation)</PanelText>
          <SquareBtn>
            <RedLamp />
          </SquareBtn>
        </PanelRow>
        <PanelRow $line>
          <PanelText $bold>MIDI の割り当てなし</PanelText>
          <Caret $tight />
          <SquareBtn>
            <Ico $s={12} viewBox="0 0 12 12">
              <path d="M4 2H7L6 8H10L9 10H2Z" fill="#111" />
            </Ico>
          </SquareBtn>
        </PanelRow>
        <RangeRow>
          0
          <Spin $ml={54}>
            <SpinUp />
            <SpinDown />
          </Spin>
          <RangeEnd>127</RangeEnd>
          <Spin>
            <SpinUp />
            <SpinDown />
          </Spin>
        </RangeRow>
        <RangeBar />
      </Panel>
      <Panel $h={60} $mt={9}>
        <PanelRow $line>
          <PanelText $dim>
            <Narrow $x={0.92}>MIDIをNoteExpへ</Narrow>
          </PanelText>
          <SquareBtn>
            <SmallDash />
          </SquareBtn>
        </PanelRow>
        <PanelRow $line>
          <PanelText $dim>
            <Narrow $x={0.82}>オーバーダビング</Narrow>
          </PanelText>
          <SquareBtn>
            <SmallDot />
          </SquareBtn>
        </PanelRow>
        <PanelRow>
          <PanelText $dim>
            <Narrow $x={0.74}>ラッチバッファー</Narrow>
          </PanelText>
          <SquareBtn $mr={7}>
            <Ico $s={12} viewBox="0 0 12 12">
              <path d="M1 2H2.5V10H1ZM6 2V10L3 6ZM10.5 2V10L7 6Z" fill="#33383e" />
            </Ico>
          </SquareBtn>
          <SquareBtn>
            <SmallDash />
          </SquareBtn>
        </PanelRow>
      </Panel>
      <SideBtn label="コードエディット" kana mt={12}>
        <Tool>
          <path d="M3 4H15M3 9H15M3 14H15" stroke="#23272c" />
          <circle cx="9" cy="4" r="2" fill="#23272c" />
          <circle cx="9" cy="9" r="2" fill="#23272c" />
          <circle cx="9" cy="14" r="2" fill="#23272c" />
        </Tool>
      </SideBtn>
      <SideBtn label="クオンタイズ" kana>
        <SerifLetter>Q</SerifLetter>
      </SideBtn>
      <SideBtn label="移調">
        <SerifLetter>T</SerifLetter>
      </SideBtn>
      <SideBtn label="長さ">
        <SerifLetter>L</SerifLetter>
      </SideBtn>
    </LeftZone>
  );
}

function NoteEditor() {
  return (
    <NoteRow>
      <Keyboard>
        {keyLines.map((y) => (
          <KeyLine key={y} $full={fullLines.includes(y)} style={{ top: y - 158 }} />
        ))}
        {blackKeys.map((y) => (
          <BlackKey key={y} style={{ top: y - 158 }} />
        ))}
        <KeyLabel style={{ top: -6 }}>C5</KeyLabel>
        <KeyLabel style={{ top: 98 }}>C4</KeyLabel>
        <KeyLabel $on style={{ top: 203 }}>
          C3
        </KeyLabel>
        <KeyLabel style={{ top: 308 }}>C2</KeyLabel>
        <KeyLabel style={{ top: 413 }}>C1</KeyLabel>
      </Keyboard>
      <Grid>
        <GridLines />
        {notes.map((n, i) => (
          <Note
            key={i}
            $sel={i === notes.length - 1}
            style={{
              left: Math.round(i * STEP),
              width: Math.round((i + 1) * STEP) - Math.round(i * STEP),
              top: n.y - 3 - 158,
              background: i === notes.length - 1 ? "#2b2d30" : n.c,
            }}
          />
        ))}
        <Cursor />
        <PencilCursor viewBox="0 0 14 18">
          <path d="M1 17L2 11L8 2L11 1L12 4L5 14Z" fill="#fff" stroke="#000" strokeWidth="1" />
          <path d="M1 17L2.5 12L5 14Z" fill="#000" />
        </PencilCursor>
      </Grid>
      <VScroll>
        <ScrollBtn>
          <Chevron dir="up" />
        </ScrollBtn>
        <Track $pad={107}>
          <VThumb />
        </Track>
        <ScrollBtn>
          <Chevron dir="down" />
        </ScrollBtn>
        <ZoomStrip>
          <ZoomSign>−</ZoomSign>
          <ZoomRail />
          <ZoomKnob viewBox="0 0 13 16">
            <path d="M12 1V15L1 8Z" fill="#6b7886" stroke="#23272c" />
          </ZoomKnob>
          <ZoomSign $bottom>+</ZoomSign>
        </ZoomStrip>
      </VScroll>
    </NoteRow>
  );
}

function VelocityLane() {
  return (
    <LaneRow>
      <LaneKeys>
        <LaneTitle>
          <Narrow $x={0.85}>ベロシティー</Narrow>
        </LaneTitle>
      </LaneKeys>
      <Lane>
        <GridLines />
        <Cursor />
        {notes.map((n, i) => (
          <VelBar
            key={i}
            style={{ left: Math.round(i * STEP) - 1, height: 844 - n.top, background: n.c }}
          />
        ))}
      </Lane>
      <VScroll>
        <ScrollBtn>
          <Chevron dir="up" />
        </ScrollBtn>
        <Track />
        <ScrollBtn>
          <Chevron dir="down" />
        </ScrollBtn>
      </VScroll>
    </LaneRow>
  );
}

function BottomBar() {
  return (
    <BottomRow>
      <BottomTools>
        <Ico $s={11} viewBox="0 0 11 11">
          <path d="M4 1H7V4H10V7H7V10H4V7H1V4H4Z" fill="none" stroke="#4f6378" />
        </Ico>
        <Ico $s={14} viewBox="0 0 14 12">
          <path d="M1 2H9L13 5V10H1Z" fill="none" stroke="#4f6378" />
        </Ico>
      </BottomTools>
      <HButton>
        <Chevron dir="left" />
      </HButton>
      <HTrack>
        <HThumb />
      </HTrack>
      <HButton>
        <Chevron dir="right" />
      </HButton>
      <HZoom>
        <HZoomSign>−</HZoomSign>
        <HZoomRail />
        <HZoomKnob viewBox="0 0 16 14">
          <path d="M1 13L8 1L15 13Z" fill="#6b7886" stroke="#23272c" />
        </HZoomKnob>
        <HZoomSign $right>+</HZoomSign>
      </HZoom>
      <Corner />
    </BottomRow>
  );
}

export default function App() {
  return (
    <>
      <GlobalStyle />
      <Page>
        <TitleBar>
          <TitleLogo>
            <CubaseLogo size={14} />
          </TitleLogo>
          <TitleText>Cubase 7.5 - [キーエディター： MIDI 01]</TitleText>
          <WinControls>
            <WinButton $w={28}>
              <WinMin />
            </WinButton>
            <WinButton $w={27}>
              <WinMax />
            </WinButton>
            <WinButton $w={45} $close>
              <Ico $s={10} viewBox="0 0 10 10">
                <path d="M1 1L9 9M9 1L1 9" stroke="#fff" strokeWidth="2" />
              </Ico>
            </WinButton>
          </WinControls>
        </TitleBar>
        <Client>
          <MenuBar>
            <MenuLogo>
              <CubaseLogo size={14} />
            </MenuLogo>
            {menus.map(([label, w]) => (
              <MenuItem key={label} $w={w}>
                {label}
              </MenuItem>
            ))}
            <MdiButtons>
              <MdiButton>
                <Ico $s={10} viewBox="0 0 10 10">
                  <path d="M2 8H8" stroke="#5b6a78" strokeWidth="2" />
                </Ico>
              </MdiButton>
              <MdiButton>
                <Ico $s={10} viewBox="0 0 10 10">
                  <path d="M3 3V1H9V6H7M1 3H7V9H1Z" fill="none" stroke="#5b6a78" />
                </Ico>
              </MdiButton>
              <MdiButton>
                <Ico $s={10} viewBox="0 0 10 10">
                  <path d="M2 2L8 8M8 2L2 8" stroke="#5b6a78" strokeWidth="2" />
                </Ico>
              </MdiButton>
            </MdiButtons>
          </MenuBar>
          <Inner>
            <Toolbars />
            <InfoLine>
              {infoCells.map((c) => (
                <InfoCell key={c.label} $w={c.w}>
                  <InfoLabel $big={c.big}>
                    {c.kana ? (
                      <Narrow $x={0.79} $center>
                        {c.label}
                      </Narrow>
                    ) : (
                      c.label
                    )}
                  </InfoLabel>
                  <InfoValue $time={c.time}>{c.value}</InfoValue>
                </InfoCell>
              ))}
            </InfoLine>
            <RulerStrip />
            <Body>
              <LeftPanel />
              <Editor>
                <NoteEditor />
                <Splitter />
                <VelocityLane />
                <BottomBar />
              </Editor>
            </Body>
          </Inner>
        </Client>
      </Page>
    </>
  );
}
